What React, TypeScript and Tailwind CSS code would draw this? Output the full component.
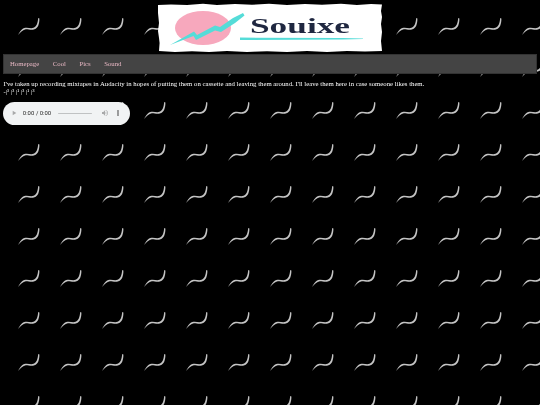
// tapered squiggle, thin tail at bottom left, thick at top right
const squiggle =
  'M18 35 C20 31.5 22 28.3 25.5 27.8 C28.5 27.5 31 28.7 33.5 27.8 C36.5 26.8 37.8 23 38.2 18 L39.4 18.4 C39.4 23.5 38.2 28 34.5 29.3 C31 30.5 28.5 29.1 25.8 29.2 C23 29.6 20.5 32 18 35 Z'

function Logo() {
  return (
    <svg width="226" height="50" viewBox="0 0 226 50" className="block blur-[0.4px]">
      <path
        d="M1 2 L14 1.4 L30 2 L46 0.8 L60 2 L78 1 L95 1.8 L112 0.8 L130 2 L148 1 L165 1.8 L184 0.8 L200 2 L214 1 L225 1.6 L224 8 L225 14 L224 21 L225 29 L224 38 L225 48 L208 48.6 L190 48 L170 49 L150 48 L130 49 L110 48.2 L90 49 L70 48 L52 49 L35 48.2 L18 49 L2 48 L2.6 40 L2 35 L1 28 L2 20 L1 10 Z"
        fill="#fff"
      />
      <ellipse cx="46" cy="25" rx="28" ry="17" fill="#f7a8bd" />
      <path
        d="M13 42 L37 28.5 L40 32 L58 22.5 L63 24 L76 15 L86 10 L87.5 12.5 L78 20 L64 29 L58 27.5 L39 37 L36.5 33 Z"
        fill="#55dcd8"
      />
      <text
        x="93"
        y="30"
        fontFamily="'Liberation Serif', serif"
        fontWeight="700"
        fontSize="20"
        textLength="100"
        lengthAdjust="spacingAndGlyphs"
        fill="#1f2740"
      >
        Souixe
      </text>
      <path d="M83 34.6 L186 35 L206 35.4 L206 36 L186 36.4 L83 37 Z" fill="#55dcd8" />
    </svg>
  )
}

export default function App() {
  return (
    <div className="relative isolate min-h-[405px] overflow-hidden bg-black font-['Liberation_Serif',serif] text-[6.75px] leading-[7.6px] text-white">
      {/* repeating squiggle behind the page */}
      <svg className="absolute inset-0 -z-10 h-full w-full blur-[0.2px]">
        <defs>
          <pattern id="tile" width="42" height="42" patternUnits="userSpaceOnUse">
            <path d={squiggle} fill="#c4c4c4" />
          </pattern>
        </defs>
        <rect width="100%" height="100%" fill="url(#tile)" />
      </svg>

      <div className="flex justify-center pt-[3px]">
        <Logo />
      </div>

      <nav className="mx-[3px] mt-[1px] flex h-[20px] items-center gap-[13.5px] border border-[#333] bg-[#444] pl-[6px] text-[#e8b8c4]">
        <a className="blur-[0.2px]">Homepage</a>
        <a className="blur-[0.2px]">Cool</a>
        <a className="blur-[0.2px]">Pics</a>
        <a className="blur-[0.2px]">Sound</a>
      </nav>

      <div className="pl-[3.5px] pt-[6px]">
        <p className="blur-[0.2px]">I've taken up recording mixtapes in Audacity in hopes of putting them on cassette and leaving them around. I'll leave them here in case someone likes them.</p>
        <p className="blur-[0.2px]">-|³ |³ |¹ |³ |¹ |³ </p>
        <audio controls className="mt-[16px] -ml-[1px] block [zoom:0.4219]" />
      </div>
    </div>
  )
}
